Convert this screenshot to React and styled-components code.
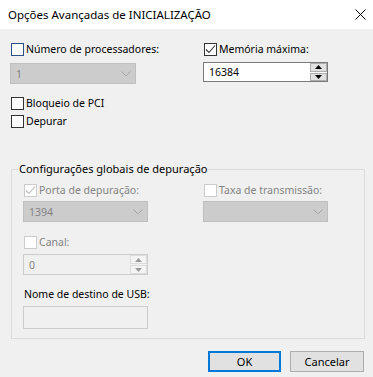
import React from "react";
import styled, { createGlobalStyle } from "styled-components";

const GlobalStyle = createGlobalStyle`
  html, body {
    margin: 0;
    padding: 0;
    background: #f0f0f0;
  }
  body {
    font-family: "Noto Sans", "Open Sans", sans-serif;
    font-size: 10.5px;
    color: #000;
  }
`;

const Window = styled.div`
  width: 373px;
  height: 377px;
  background: #f0f0f0;
  overflow: hidden;
`;

const TitleBar = styled.div`
  height: 29px;
  background: #fff;
  display: flex;
  align-items: center;
  justify-content: space-between;
  padding: 0 7px 0 8px;
  box-sizing: border-box;
  font-size: 11.5px;
`;

const Content = styled.div`
  padding: 14px 8px 0 10px;
`;

const TopGrid = styled.div`
  display: grid;
  grid-template-columns: 193px 125px;
  align-items: start;
`;

const Column = styled.div`
  display: flex;
  flex-direction: column;
`;

const CheckRow = styled.label`
  display: flex;
  align-items: center;
  gap: 2px;
  height: 13px;
  line-height: 13px;
  margin-left: 1px;
  margin-top: ${(p) => p.$mt || 0}px;
  color: ${(p) => (p.$disabled ? "#838383" : "#000")};
  white-space: nowrap;
`;

const Box = styled.span`
  width: 13px;
  height: 13px;
  box-sizing: border-box;
  border: 1px solid ${(p) => p.$border};
  background: ${(p) => p.$bg || "#fff"};
  display: flex;
  align-items: center;
  justify-content: center;
  flex: none;
`;

const Combo = styled.div`
  width: ${(p) => p.$w || 126}px;
  height: 21px;
  box-sizing: border-box;
  border: 1px solid #bfbfbf;
  background: #cccccc;
  color: #838383;
  display: flex;
  align-items: center;
  justify-content: space-between;
  padding: 0 4px 0 5px;
  margin-top: ${(p) => p.$mt || 0}px;
`;

const Spinner = styled.div`
  width: ${(p) => p.$w || 125}px;
  height: ${(p) => p.$h || 21}px;
  box-sizing: border-box;
  border: 1px solid ${(p) => (p.$disabled ? "#cccccc" : "#7a7a7a")};
  background: ${(p) => (p.$disabled ? "#f0f0f0" : "#fff")};
  color: ${(p) => (p.$disabled ? "#838383" : "#000")};
  display: flex;
  align-items: stretch;
  margin-top: ${(p) => p.$mt || 0}px;
`;

const SpinValue = styled.div`
  flex: 1;
  display: flex;
  align-items: center;
  padding-left: 5px;
`;

const SpinButtons = styled.div`
  width: 17px;
  display: flex;
  flex-direction: column;
  gap: 1px;
`;

const SpinBtn = styled.div`
  flex: 1;
  border: 1px solid ${(p) => (p.$disabled ? "#dcdcdc" : "#adadad")};
  background: ${(p) => (p.$disabled ? "#f4f4f4" : "#e1e1e1")};
  display: flex;
  align-items: center;
  justify-content: center;
`;

const Group = styled.fieldset`
  margin: 33px 0 0 1px;
  padding: 0;
  border: 1px solid #dcdcdc;
  min-width: 0;
`;

const Legend = styled.legend`
  margin-left: 6px;
  padding: 0 1px;
  line-height: 16px;
  font-size: 11px;
`;

const GroupBody = styled.div`
  padding: 7px 0 9px 11px;
  display: grid;
  grid-template-columns: 180px 125px;
  align-items: start;
`;

const Label = styled.div`
  line-height: 14px;
  margin-top: ${(p) => p.$mt || 0}px;
  margin-left: 1px;
`;

const TextBox = styled.div`
  width: 125px;
  height: 23px;
  box-sizing: border-box;
  border: 1px solid #cccccc;
  background: #f0f0f0;
  margin-top: ${(p) => p.$mt || 0}px;
`;

const Buttons = styled.div`
  display: flex;
  justify-content: flex-end;
  gap: 9px;
  margin-top: 12px;
  padding-right: 1px;
`;

const Button = styled.button`
  width: ${(p) => p.$w || 73}px;
  height: 21px;
  box-sizing: border-box;
  font-family: inherit;
  font-size: 11px;
  color: #000;
  background: #e1e1e1;
  border: ${(p) => (p.$default ? "2px solid #0078d7" : "1px solid #adadad")};
  padding: 0;
`;

const Check = ({ color }) => (
  <svg width="11" height="11" viewBox="0 0 11 11">
    <polyline points="1,5.5 4,8.5 10,1.5" fill="none" stroke={color} strokeWidth="1.1" />
  </svg>
);

const Chevron = () => (
  <svg width="10" height="6" viewBox="0 0 10 6">
    <polyline points="0.5,0.5 5,5 9.5,0.5" fill="none" stroke="#a6a6a6" strokeWidth="1" />
  </svg>
);

const Tri = ({ up, color }) => (
  <svg width="7" height="4" viewBox="0 0 7 4">
    <polygon points={up ? "0,4 7,4 3.5,0" : "0,0 7,0 3.5,4"} fill={color} />
  </svg>
);

const Close = () => (
  <svg width="11" height="11" viewBox="0 0 11 11">
    <path d="M0.5 0.5 L10.5 10.5 M10.5 0.5 L0.5 10.5" stroke="#000" strokeWidth="1" />
  </svg>
);

const SpinControl = ({ value, disabled, mt }) => {
  const c = disabled ? "#9a9a9a" : "#000";
  return (
    <Spinner $disabled={disabled} $mt={mt} $h={disabled ? 21 : 20}>
      <SpinValue>{value}</SpinValue>
      <SpinButtons>
        <SpinBtn $disabled={disabled}><Tri up color={c} /></SpinBtn>
        <SpinBtn $disabled={disabled}><Tri color={c} /></SpinBtn>
      </SpinButtons>
    </Spinner>
  );
};

export default function App() {
  return (
    <Window>
      <GlobalStyle />
      <TitleBar>
        <span>Opções Avançadas de INICIALIZAÇÃO</span>
        <Close />
      </TitleBar>
      <Content>
        <TopGrid>
          <Column>
            <CheckRow>
              <Box $border="#2b4f86" />
              Número de processadores:
            </CheckRow>
            <Combo $mt={7}>
              <span>1</span>
              <Chevron />
            </Combo>
          </Column>
          <Column>
            <CheckRow>
              <Box $border="#333">
                <Check color="#333" />
              </Box>
              Memória máxima:
            </CheckRow>
            <SpinControl value="16384" mt={6} />
          </Column>
        </TopGrid>
        <CheckRow $mt={13}>
          <Box $border="#333" />
          Bloqueio de PCI
        </CheckRow>
        <CheckRow $mt={5}>
          <Box $border="#333" />
          Depurar
        </CheckRow>

        <Group>
          <Legend>Configurações globais de depuração</Legend>
          <GroupBody>
            <Column>
              <CheckRow $disabled>
                <Box $border="#cccccc">
                  <Check color="#bcbcbc" />
                </Box>
                Porta de depuração:
              </CheckRow>
              <Combo $mt={4} $w={125}>
                <span>1394</span>
                <Chevron />
              </Combo>
              <CheckRow $disabled $mt={14}>
                <Box $border="#cccccc" />
                Canal:
              </CheckRow>
              <SpinControl value="0" disabled mt={5} />
              <Label $mt={12}>Nome de destino de USB:</Label>
              <TextBox $mt={5} />
            </Column>
            <Column>
              <CheckRow $disabled>
                <Box $border="#cccccc" />
                Taxa de transmissão:
              </CheckRow>
              <Combo $mt={4} $w={125}>
                <span />
                <Chevron />
              </Combo>
            </Column>
          </GroupBody>
        </Group>

        <Buttons>
          <Button $default>OK</Button>
          <Button $w={74}>Cancelar</Button>
        </Buttons>
      </Content>
    </Window>
  );
}
